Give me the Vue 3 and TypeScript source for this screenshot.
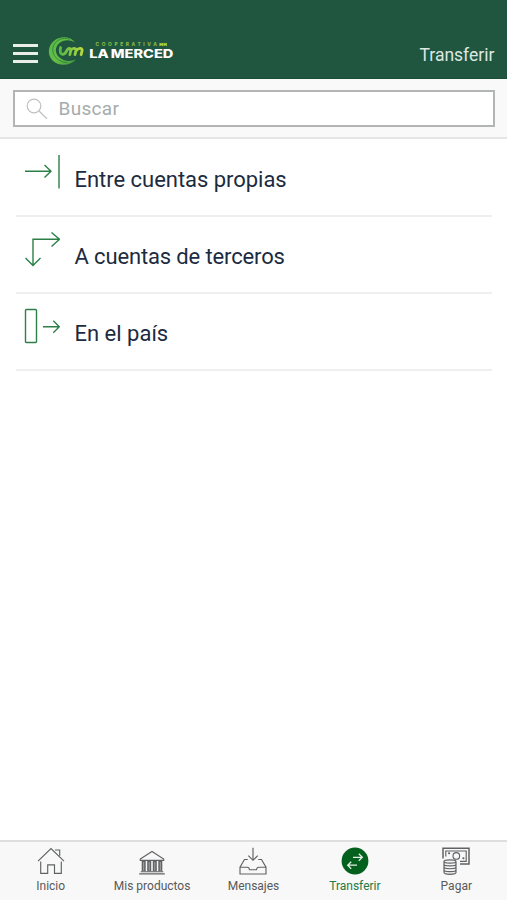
<script setup lang="ts">
import { ref } from 'vue'

interface Option { id: string; label: string; icon: string }

const options: Option[] = [
  { id: 'own', label: 'Entre cuentas propias', icon: 'M1 17.3H26.5M20.5 11L27 17.3L20.5 23.6M35 1V34.5' },
  { id: 'third', label: 'A cuentas de terceros', icon: 'M9 34.5V8.3H35.5M27.5 1.5L35.5 8.3L27.5 15.5M1.5 27L9 34.5L16.5 27' },
  { id: 'country', label: 'En el país', icon: 'M2.5 1.5H11.5Q12.5 1.5 12.5 2.5V33.5Q12.5 34.5 11.5 34.5H2.5Q1.5 34.5 1.5 33.5V2.5Q1.5 1.5 2.5 1.5ZM19 18.7H35M29.3 12.7L35.3 18.7L29.3 24.7' },
]
const tabs = [
  { id: 'home', label: 'Inicio' },
  { id: 'products', label: 'Mis productos' },
  { id: 'messages', label: 'Mensajes' },
  { id: 'transfer', label: 'Transferir' },
  { id: 'pay', label: 'Pagar' },
]
const active = ref('transfer')
const query = ref('')
</script>

<template>
  <div class="screen">
    <header class="header">
      <button class="menu" aria-label="Menú"><span /><span /><span /></button>
      <svg class="logo" viewBox="0 0 128 32" width="128" height="32">
        <defs>
          <linearGradient id="swoosh" x1="0" y1="0" x2="1" y2="1">
            <stop offset="0" stop-color="#55b947" />
            <stop offset=".55" stop-color="#66bd45" />
            <stop offset="1" stop-color="#3e983d" />
          </linearGradient>
          <linearGradient id="waves" x1="0" x2="1">
            <stop offset="0" stop-color="#55b947" />
            <stop offset="1" stop-color="#b5d83d" />
          </linearGradient>
        </defs>
        <path fill="url(#swoosh)" d="M27 6.5C23 .8 13.5-.4 7 4C.2 8.6-1.3 18.3 4.3 24.2C10.3 30.6 22.2 30.3 28 23.3C22.4 26 15.5 25.5 11.2 21.3C6.8 17.1 6.8 11 11.2 7.2C15.4 3.7 21.8 3.3 27 6.5Z" />
        <path fill="none" stroke="#2f7d40" stroke-width=".8" d="M22 3.4C15-.2 5.7 5 4.8 12.2C4 19.2 9.7 26.3 19.5 26.6" />
        <path fill="none" stroke="url(#waves)" stroke-width="2.8" stroke-linecap="round" stroke-linejoin="round" d="M12.6 11.5C11.3 16 12.8 18.6 15 18.3C19 17.8 18.4 12.6 20.8 12.3C23.3 12.2 22.9 15 21.8 18.7M22.8 14.4C24.3 11.8 28.3 11.7 27.9 14.7L27 18.7M28.7 14.3C30.4 11.6 34.5 11.7 34.1 14.7L33.1 18.7" />
        <text class="logo-small" x="47.5" y="10.4" textLength="61.5">COOPERATIVA</text>
        <path fill="#b5d83d" d="M111.5 6.7L113.2 7.6L114.9 6.7V10.2L113.2 9.3L111.5 10.2ZM115.4 6.7L117.1 7.6L118.8 6.7V10.2L117.1 9.3L115.4 10.2Z" />
        <text class="logo-name" x="41.3" y="21.5" textLength="84" lengthAdjust="spacingAndGlyphs">LA MERCED</text>
      </svg>
      <h1 class="title">Transferir</h1>
    </header>

    <div class="search-bar">
      <label class="search">
        <svg viewBox="0 0 22 22" width="22" height="22"><circle cx="8" cy="8" r="6.8" /><path d="M13 13L21 20.7" /></svg>
        <input v-model="query" placeholder="Buscar" />
      </label>
    </div>

    <main class="options">
      <button v-for="option in options" :key="option.id" class="option">
        <svg class="option-icon" viewBox="0 0 36 36" width="36" height="36"><path :d="option.icon" /></svg>
        <span class="option-label" :class="option.id">{{ option.label }}</span>
      </button>
    </main>

    <nav class="tabs">
      <button v-for="tab in tabs" :key="tab.id" class="tab" :class="[tab.id, { active: active === tab.id }]" @click="active = tab.id">
        <svg class="tab-icon" viewBox="0 0 28 28" width="28" height="28">
          <template v-if="tab.id === 'home'">
            <path d="M1 14.2L14 1.5L27 14.2M18 3H22.7V8.7M3.7 14.5V26.3H10.7V17.8H17.5V26.3H24.3V14.5" />
          </template>
          <template v-else-if="tab.id === 'products'">
            <path d="M2.3 12L14 4.5L25.7 12V13.3H2.3ZM1.2 26.9H26.8M2.7 24.7H25.3" />
            <path class="columns" d="M5.7 14V24.2M11.2 14V24.2M16.8 14V24.2M22.3 14V24.2" />
            <path class="column-lines" d="M5.7 15V23.7M11.2 15V23.7M16.8 15V23.7M22.3 15V23.7" />
          </template>
          <template v-else-if="tab.id === 'messages'">
            <path d="M14 .7V13M9.3 8.7L14 13.3L18.7 8.7M8.8 12.5H5.5L1 20.2V27H27V20.2L22.5 12.5H19.2M1 20.2H8.3Q10.2 20.2 10.5 22.7H17.5Q17.8 20.2 19.7 20.2H27" />
          </template>
          <template v-else-if="tab.id === 'transfer'">
            <circle class="disc" cx="14" cy="14" r="13.4" />
            <path class="on-disc" d="M12 10.3H21.2M17.8 6.8L21.3 10.3L17.8 13.8M16 18.2H6.8M10.2 14.7L6.7 18.2L10.2 21.7" />
          </template>
          <template v-else>
            <path class="note-edge" d="M1 11.5V1.2H27V17H18" />
            <path d="M3.8 9.5V4H24.2V14.3H18" />
            <circle cx="14.3" cy="8.9" r="3.3" />
            <path class="dot" d="M7 6.3H7.2M21.3 11.2H21.5" />
            <path class="coins" d="M2 14.5C2 12.2 14 12.2 14 14.5V25.6C14 27.9 2 27.9 2 25.6ZM2 14.5C2 16.7 14 16.7 14 14.5M2 17.3C2 19.5 14 19.5 14 17.3M2 20.1C2 22.3 14 22.3 14 20.1M2 22.9C2 25.1 14 25.1 14 22.9" />
          </template>
        </svg>
        <span class="tab-label">{{ tab.label }}</span>
      </button>
    </nav>
  </div>
</template>

<style>
body { margin: 0; background: #fff; }
</style>

<style scoped>
.screen { display: flex; flex-direction: column; height: 900px; overflow: hidden; background: #fff; font-family: Roboto, "Open Sans", sans-serif; }
button { font: inherit; color: inherit; background: none; border: 0; padding: 0; margin: 0; }
.header { box-sizing: border-box; height: 79px; flex: none; display: flex; align-items: flex-start; background: #20563f; padding: 0 13px; border-bottom: 1px solid #194d36; }
.menu { display: flex; flex-direction: column; gap: 5px; width: 25px; margin-top: 44px; }
.menu span { height: 3px; background: #e9eeeb; }
.logo { margin: 36px 0 0 10px; overflow: visible; }
.logo-small { font: 800 4.8px/1 Inter, sans-serif; fill: #86b843; }
.logo-name { font: 800 11.4px Inter, sans-serif; word-spacing: -.9px; fill: #fff; }
.title { margin: 44px -.4px 0 auto; font-size: 17.5px; line-height: 22px; font-weight: 400; color: #dce8e1; }
.search-bar { box-sizing: border-box; flex: none; height: 60px; padding: 11px 12px 0 13px; background: #f9f9f9; border-bottom: 2px solid #e5e5e5; }
.search { box-sizing: border-box; display: flex; height: 37px; border: 2px solid #b3b5b5; background: #fff; padding-left: 11px; }
.search svg { margin-top: 6px; flex: none; fill: none; stroke: #bfc1c1; stroke-width: 1.2; }
.search input { min-width: 0; flex: 1; border: 0; outline: 0; background: none; padding: 0; margin-left: 10.5px; font: 400 19px/33px Roboto, sans-serif; letter-spacing: .3px; color: #555; }
.search input::placeholder { color: #a6acae; opacity: 1; }
.options { flex: 1; padding: 1px 15px 0 16px; }
.option { box-sizing: border-box; display: flex; align-items: flex-start; width: 100%; height: 77px; padding: 14px 0 0 8px; border-bottom: 2px solid #efefef; text-align: left; }
.option-icon { flex: none; fill: none; stroke: #2c8047; stroke-width: 1.4; }
.option-label { margin: 13px 0 0 14.5px; font-size: 22px; line-height: 26px; color: #1c2b40; white-space: nowrap; }
.option-label.third { letter-spacing: -.14px; }
.option-label.own { letter-spacing: -.03px; }
.tabs { box-sizing: border-box; flex: none; height: 60px; display: grid; grid-template-columns: repeat(5, 1fr); border-top: 2px solid #dedede; background: #f8f8f8; }
.tab { display: flex; flex-direction: column; align-items: center; padding-top: 5px; color: #59595b; }
.tab-icon { fill: none; stroke: #606264; stroke-width: 1.15; }
.tab-label { margin-top: 4px; font-size: 12px; line-height: 14px; white-space: nowrap; }
.tab.active { color: #237a43; }
.columns { stroke-width: 4; }
.column-lines { stroke: #a5a6a7; stroke-width: 1; }
.disc { fill: #04611d; stroke: none; }
.on-disc { stroke: #e3efe5; stroke-width: 1.3; }
.note-edge { stroke-width: 1.5; }
.dot { stroke-width: 2; stroke-linecap: round; }
.coins { fill: #ededed; stroke-width: 1.2; }
</style>
